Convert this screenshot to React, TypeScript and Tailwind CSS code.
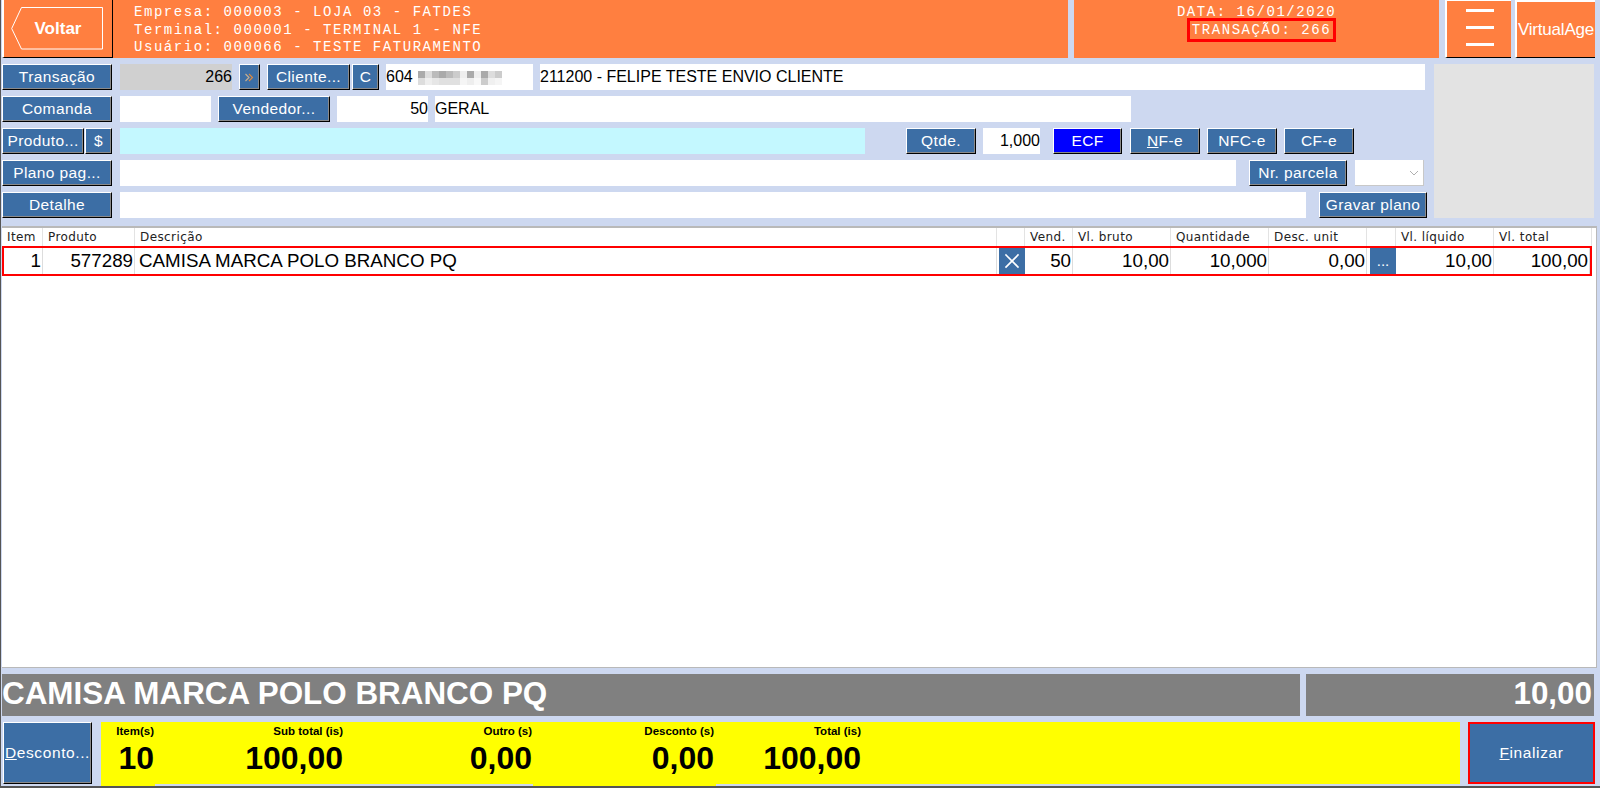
import type { ReactNode } from 'react';
import { X } from 'lucide-react';

const bevel =
  'flex items-center justify-center shrink-0 h-[26px] bg-[#3c6ea5] text-white text-[15.5px] tracking-[0.4px] border border-t-white border-l-white border-r-black border-b-black shadow-[inset_-1px_-1px_0_#8a8a8a]';

const field = 'flex items-center shrink-0 h-[26px] text-black text-[16px] leading-none';

const headCols = 'grid grid-cols-[41px_92px_862px_28px_48px_98px_98px_98px_29px_98px_98px]';
// the red border of the row takes 2px on each side
const rowCols = 'grid grid-cols-[39px_92px_862px_28px_48px_98px_98px_98px_29px_98px_96px]';

const blurTop = ['#aaa', '#ddd', '#bbb', '#aaa', '#bbb', '#ccc', '#eee', '#aaa', '#eee', '#aaa', '#ddd', '#ccc'];
const blurBottom = ['#ddd', '#eee', '#e6e6e6', '#e0e0e0', '#e0e0e0', '#e0e0e0', '#f5f5f5', '#eee', '#f8f8f8', '#ccc', '#f0f0f0', '#f5f5f5'];

function Btn({ className, children }: { className: string; children: ReactNode }) {
  return <button className={`${bevel} ${className}`}>{children}</button>;
}

function HeadCell({ children }: { children?: ReactNode }) {
  return <div className="h-[18px] pl-[5px] border-r border-[#e3e3e3] leading-[18px] whitespace-nowrap">{children}</div>;
}

function RowCell({ children }: { children?: ReactNode }) {
  return (
    <div className="h-[26px] pr-[1px] flex items-center justify-end border-r border-[#dddddd] text-[18.75px] text-black whitespace-nowrap">
      {children}
    </div>
  );
}

function Total({ width, label, value }: { width: string; label: string; value: string }) {
  return (
    <div className={`${width} shrink-0 flex flex-col items-end`}>
      <div className="h-[17px] mt-[1px] font-bold text-[11.5px] leading-[17px] text-black whitespace-nowrap">{label}</div>
      <div className="mt-[0px] font-bold text-[32px] leading-[36px] text-black whitespace-nowrap">{value}</div>
    </div>
  );
}

export default function App() {
  return (
    <div className="w-[1600px] h-[788px] overflow-hidden bg-[#cdd8f0] font-['Liberation_Sans',sans-serif] flex flex-col border-l border-b-2 border-[#555555]">
      {/* Top bar */}
      <header className="flex h-[58px] shrink-0 pl-[1px]">
        <button className="relative w-[111px] h-[58px] shrink-0 bg-[#ff7f40] border-l-2 border-l-white border-r border-r-black border-b border-b-black flex items-center justify-center text-white font-bold text-[17px]">
          <svg className="absolute left-[7px] top-[7px]" width="93" height="43" viewBox="0 0 93 43" fill="none" aria-hidden>
            <path d="M10.5.5H91.5V42H10.5L.7 21.5Z" stroke="#fff" strokeWidth="1" />
          </svg>
          <span className="relative">Voltar</span>
        </button>
        <div className="w-[955px] shrink-0 bg-[#ff7f40] pl-[21px] font-['Liberation_Mono',monospace] text-[14px] tracking-[1.55px] leading-[17.5px] pt-[4px] text-white whitespace-pre">
          <div>Empresa: 000003 - LOJA 03 - FATDES</div>
          <div>Terminal: 000001 - TERMINAL 1 - NFE</div>
          <div>Usuário: 000066 - TESTE FATURAMENTO</div>
        </div>
        <div className="w-[365px] ml-[6px] shrink-0 bg-[#ff7f40] flex flex-col items-center pt-[4px] font-['Liberation_Mono',monospace] text-[14px] tracking-[1.55px] leading-[17.5px] text-white whitespace-pre">
          <div>DATA: 16/01/2020</div>
          <div className="-mt-[4px] ml-[10px] px-[2px] border-[3px] border-[#ff0000] h-[24px] leading-[18px]">TRANSAÇÃO: 266</div>
        </div>
        <button className="w-[66px] ml-[6px] h-[58px] shrink-0 bg-[#ff7f40] border-t border-t-white border-l-2 border-l-white border-b border-b-black flex flex-col items-center gap-[14px] pt-[8px] pl-[1px]">
          <span className="block w-[28px] h-[3px] bg-white" />
          <span className="block w-[28px] h-[3px] bg-white" />
          <span className="block w-[28px] h-[3px] bg-white" />
        </button>
        <button className="w-[80px] ml-[4px] h-[58px] shrink-0 bg-[#ff7f40] border-t-2 border-t-white border-l-2 border-l-white border-b border-b-black text-white text-[17px] tracking-[-0.2px] leading-none whitespace-nowrap flex items-center justify-center">
          VirtualAge
        </button>
      </header>

      {/* Form */}
      <section className="flex mt-[6px] h-[154px] shrink-0 pl-[1px]">
        <div className="w-[1426px] shrink-0 flex flex-col gap-[6px]">
          <div className="flex">
            <Btn className="w-[110px]">Transação</Btn>
            <div className={`${field} w-[112px] ml-[8px] bg-[#d0d0d0] justify-end`}>266</div>
            <Btn className="w-[21px] ml-[7px]">
              <svg width="11" height="9" viewBox="0 0 11 9" fill="none" aria-hidden>
                <path d="M1.5 1 5 4.5 1.5 8" stroke="#c9b08f" strokeWidth="1.1" />
                <path d="M5 1 8.5 4.5 5 8" stroke="#e08a40" strokeWidth="1.1" />
              </svg>
            </Btn>
            <Btn className="w-[83px] ml-[7px]">Cliente...</Btn>
            <Btn className="w-[27px] ml-[2px]">C</Btn>
            <div className={`${field} w-[147px] ml-[7px] bg-white`}>
              <span className="w-[32px] shrink-0">604</span>
              <svg width="84" height="14" className="mt-[1px]" viewBox="0 0 84 14" aria-hidden>
                {blurTop.map((c, i) => (
                  <rect key={`t${i}`} x={i * 7} y="0" width="7" height="7" fill={c} />
                ))}
                {blurBottom.map((c, i) => (
                  <rect key={`b${i}`} x={i * 7} y="7" width="7" height="7" fill={c} />
                ))}
              </svg>
            </div>
            <div className={`${field} w-[885px] ml-[7px] bg-white`}>211200 - FELIPE TESTE ENVIO CLIENTE</div>
          </div>
          <div className="flex">
            <Btn className="w-[110px]">Comanda</Btn>
            <div className={`${field} w-[91px] ml-[8px] bg-white`} />
            <Btn className="w-[112px] ml-[7px]">Vendedor...</Btn>
            <div className={`${field} w-[91px] ml-[7px] bg-white justify-end`}>50</div>
            <div className={`${field} w-[696px] ml-[7px] bg-white`}>GERAL</div>
          </div>
          <div className="flex">
            <Btn className="w-[82px]">Produto...</Btn>
            <Btn className="w-[27px] ml-[1px]">$</Btn>
            <div className="w-[745px] h-[26px] ml-[8px] shrink-0 bg-[#c4f8ff]" />
            <Btn className="w-[70px] ml-[41px]">Qtde.</Btn>
            <div className={`${field} w-[57px] ml-[7px] bg-white justify-end`}>1,000</div>
            <Btn className="w-[69px] ml-[13px] bg-[#0000ff]!">ECF</Btn>
            <Btn className="w-[70px] ml-[8px]">
              <span>
                <span className="underline">N</span>F-e
              </span>
            </Btn>
            <Btn className="w-[70px] ml-[7px]">NFC-e</Btn>
            <Btn className="w-[70px] ml-[7px]">CF-e</Btn>
          </div>
          <div className="flex">
            <Btn className="w-[110px]">Plano pag...</Btn>
            <div className={`${field} w-[1116px] ml-[8px] bg-white`} />
            <Btn className="w-[98px] ml-[13px]">Nr. parcela</Btn>
            <div className={`${field} w-[69px] ml-[8px] bg-white justify-end pr-[4px] border-r border-b border-[#c8c8c8]`}>
              <svg width="10" height="6" viewBox="0 0 10 6" fill="none" aria-hidden>
                <path d="M1 1 5 5 9 1" stroke="#b0b0b0" strokeWidth="1" />
              </svg>
            </div>
          </div>
          <div className="flex">
            <Btn className="w-[110px]">Detalhe</Btn>
            <div className={`${field} w-[1186px] ml-[8px] bg-white`} />
            <Btn className="w-[108px] ml-[13px] tracking-[0.1px]">Gravar plano</Btn>
          </div>
        </div>
        <div className="w-[160px] ml-[6px] shrink-0 bg-[#e3e3e3]" />
      </section>

      {/* Items table */}
      <section className="w-[1595px] h-[442px] ml-[1px] mt-[8px] shrink-0 bg-white border-t-2 border-b border-r border-[#b9b9b9]">
        <div className={`${headCols} font-['DejaVu_Sans',sans-serif] text-[12px] tracking-[0.4px] text-[#222222]`}>
          <HeadCell>Item</HeadCell>
          <HeadCell>Produto</HeadCell>
          <HeadCell>Descrição</HeadCell>
          <HeadCell />
          <HeadCell>Vend.</HeadCell>
          <HeadCell>Vl. bruto</HeadCell>
          <HeadCell>Quantidade</HeadCell>
          <HeadCell>Desc. unit</HeadCell>
          <HeadCell />
          <HeadCell>Vl. líquido</HeadCell>
          <HeadCell>Vl. total</HeadCell>
        </div>
        <div className={`${rowCols} w-[1590px] h-[30px] border-2 border-[#ff0000]`}>
          <RowCell>1</RowCell>
          <RowCell>577289</RowCell>
          <div className="h-[26px] pl-[4px] flex items-center border-r border-[#dddddd] text-[18.75px] text-black whitespace-nowrap">
            CAMISA MARCA POLO BRANCO PQ
          </div>
          <div className="h-[26px] flex justify-end">
            <div className="w-[26px] h-[26px] bg-[#3c6ea5] flex items-center justify-center">
              <X className="w-[24px] h-[24px] text-white" strokeWidth={1.6} strokeLinecap="square" />
            </div>
          </div>
          <RowCell>50</RowCell>
          <RowCell>10,00</RowCell>
          <RowCell>10,000</RowCell>
          <RowCell>0,00</RowCell>
          <div className="h-[26px] flex justify-end">
            <div className="w-[26px] h-[26px] bg-[#3c6ea5] flex items-center justify-center text-white text-[15px]">...</div>
          </div>
          <RowCell>10,00</RowCell>
          <RowCell>100,00</RowCell>
        </div>
      </section>

      {/* Current item */}
      <section className="flex mt-[6px] h-[42px] shrink-0 pl-[1px]">
        <div className="w-[1298px] shrink-0 bg-[#808080] text-white font-bold text-[31.4px] leading-[40px] whitespace-nowrap">
          CAMISA MARCA POLO BRANCO PQ
        </div>
        <div className="w-[288px] ml-[6px] shrink-0 bg-[#808080] text-white font-bold text-[31.4px] leading-[40px] text-right pr-[2px]">
          10,00
        </div>
      </section>

      {/* Totals */}
      <section className="relative flex mt-[6px] h-[64px] shrink-0 pl-[2px]">
        <button className="w-[89px] h-[62px] shrink-0 bg-[#3c6ea5] text-white text-[15.5px] tracking-[0.6px] leading-none border border-t-white border-l-white border-r-black border-b-black shadow-[inset_-1px_-1px_0_#8a8a8a]">
          <span className="underline">D</span>esconto...
        </button>
        <div className="w-[1359px] h-[64px] ml-[9px] shrink-0 bg-[#ffff00] flex">
          <Total width="w-[53px]" label="Item(s)" value="10" />
          <Total width="w-[189px]" label="Sub total (is)" value="100,00" />
          <Total width="w-[189px]" label="Outro (s)" value="0,00" />
          <Total width="w-[182px]" label="Desconto (s)" value="0,00" />
          <Total width="w-[147px]" label="Total (is)" value="100,00" />
        </div>
        <button className="w-[127px] h-[62px] ml-[8px] shrink-0 bg-[#3c6ea5] text-white text-[15.5px] tracking-[0.6px] leading-none border-2 border-[#ff0000]">
          <span className="underline">F</span>inalizar
        </button>
        {/* strips of the form background that show under the yellow panel */}
        <div className="absolute left-[154px] bottom-0 w-[378px] h-[2px] bg-[#cdd8f0]" />
        <div className="absolute left-[715px] bottom-0 w-[745px] h-[2px] bg-[#cdd8f0]" />
      </section>
    </div>
  );
}
